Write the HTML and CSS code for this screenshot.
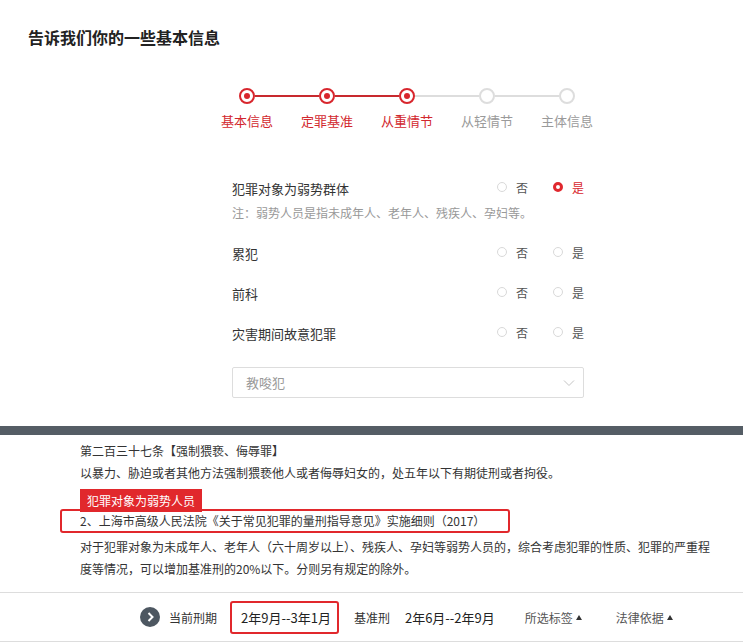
FILE: index.html
```html
<!DOCTYPE html>
<html lang="zh-CN">
<head>
    <meta charset="UTF-8">
    <title>量刑信息</title>
    <link rel="stylesheet" href="styles.css">
</head>
<body>
    <h1 class="title">告诉我们你的一些基本信息</h1>

    <div class="steps">
        <div class="track">
            <span class="dot done"></span><span class="bar done"></span>
            <span class="dot done"></span><span class="bar done"></span>
            <span class="dot done"></span><span class="bar"></span>
            <span class="dot"></span><span class="bar"></span>
            <span class="dot"></span>
        </div>
        <div class="labels">
            <span class="done">基本信息</span>
            <span class="done">定罪基准</span>
            <span class="done">从重情节</span>
            <span>从轻情节</span>
            <span>主体信息</span>
        </div>
    </div>

    <div class="form">
        <div class="row">
            <span>犯罪对象为弱势群体</span>
            <div class="radios">
                <label class="radio"><i></i>否</label>
                <label class="radio checked"><i></i>是</label>
            </div>
        </div>
        <p class="note">注：弱势人员是指未成年人、老年人、残疾人、孕妇等。</p>
        <div class="row">
            <span>累犯</span>
            <div class="radios">
                <label class="radio"><i></i>否</label>
                <label class="radio"><i></i>是</label>
            </div>
        </div>
        <div class="row">
            <span>前科</span>
            <div class="radios">
                <label class="radio"><i></i>否</label>
                <label class="radio"><i></i>是</label>
            </div>
        </div>
        <div class="row">
            <span>灾害期间故意犯罪</span>
            <div class="radios">
                <label class="radio"><i></i>否</label>
                <label class="radio"><i></i>是</label>
            </div>
        </div>
        <div class="select">
            <span>教唆犯</span>
            <svg width="12" height="8" viewBox="0 0 12 8"><polyline points="1,1.5 6,6.5 11,1.5" fill="none" stroke="#c4c4c4" stroke-width="1"/></svg>
        </div>
    </div>

    <div class="divider"></div>

    <div class="law">
        <p>第二百三十七条【强制猥亵、侮辱罪】</p>
        <p>以暴力、胁迫或者其他方法强制猥亵他人或者侮辱妇女的，处五年以下有期徒刑或者拘役。</p>
        <span class="tag">犯罪对象为弱势人员</span>
        <p class="source">2、上海市高级人民法院《关于常见犯罪的量刑指导意见》实施细则（2017）</p>
        <p class="rule">对于犯罪对象为未成年人、老年人（六十周岁以上）、残疾人、孕妇等弱势人员的，综合考虑犯罪的性质、犯罪的严重程度等情况，可以增加基准刑的20%以下。分则另有规定的除外。</p>
    </div>

    <div class="footer">
        <svg class="go" width="20" height="20" viewBox="0 0 20 20"><circle cx="10" cy="10" r="10" fill="#4d5761"/><polyline points="8.5,6 12.5,10 8.5,14" fill="none" stroke="#fff" stroke-width="2"/></svg>
        <span class="name first">当前刑期</span>
        <span class="current">2年9月--3年1月</span>
        <span class="name">基准刑</span>
        <span class="value">2年6月--2年9月</span>
        <span class="menu">所选标签<i></i></span>
        <span class="menu">法律依据<i></i></span>
    </div>
</body>
</html>
```

FILE: styles.css
```css
body {
    margin: 0;
    font-family: "Noto Sans CJK SC", "Liberation Sans", sans-serif;
    font-size: 13px;
    color: #333;
    background: #fff;
}
.title {
    margin: 0;
    padding: 27px 0 0 28px;
    font-size: 16px;
    line-height: 20px;
    font-weight: bold;
    color: #222;
}
.steps {
    margin-top: 41px;
}
.track {
    display: flex;
    align-items: center;
    padding-left: 239px;
}
.dot {
    box-sizing: border-box;
    width: 16px;
    height: 16px;
    border: 2px solid #ddd;
    border-radius: 50%;
    background: #fff;
    display: flex;
    align-items: center;
    justify-content: center;
}
.dot.done {
    border-color: #d8262d;
}
.dot.done::after {
    content: "";
    width: 6px;
    height: 6px;
    border-radius: 50%;
    background: #d8262d;
}
.bar {
    width: 64px;
    height: 2px;
    background: #ddd;
}
.bar.done {
    background: #c8292e;
}
.labels {
    display: flex;
    padding-left: 207px;
    margin-top: 9px;
}
.labels span {
    width: 80px;
    text-align: center;
    line-height: 16px;
    color: #9a9a9a;
}
.labels span.done {
    color: #d2282e;
}
.form {
    margin: 49px 0 0 232px;
    width: 352px;
}
.row {
    display: flex;
    justify-content: space-between;
    align-items: center;
    height: 20px;
    margin-top: 20px;
}
.row:first-child {
    margin-top: 0;
}
.radios {
    display: flex;
    gap: 25px;
    margin-top: -2px;
}
.radio {
    display: flex;
    align-items: center;
    gap: 9px;
    color: #555;
    font-size: 12px;
}
.radio i {
    box-sizing: border-box;
    width: 10px;
    height: 10px;
    border: 1px solid #d9d9d9;
    border-radius: 50%;
}
.radio.checked {
    color: #d8262d;
}
.radio.checked i {
    border: 3px solid #e0282e;
}
.note {
    margin: 5px 0 0;
    line-height: 20px;
    font-size: 12px;
    color: #999;
}
.select {
    box-sizing: border-box;
    margin-top: 24px;
    height: 31px;
    border: 1px solid #ddd;
    border-radius: 2px;
    display: flex;
    justify-content: space-between;
    align-items: center;
    padding: 0 8px 0 13px;
    color: #999;
}
.divider {
    margin-top: 28px;
    height: 9px;
    background: #555d65;
}
.law {
    padding: 5px 23px 0 80px;
    font-size: 12px;
    line-height: 22px;
    color: #333;
}
.law p {
    margin: 0;
}
.tag {
    position: relative;
    z-index: 1;
    display: inline-block;
    margin-top: 5px;
    height: 23px;
    line-height: 23px;
    padding: 0 7px;
    background: #e1282c;
    color: #fff;
}
.law .source {
    box-sizing: border-box;
    width: 450px;
    height: 24px;
    line-height: 20px;
    margin: -3px 0 0 -20px;
    padding-left: 18px;
    border: 2px solid #e1282c;
    border-radius: 3px;
}
.law .rule {
    margin-top: 3px;
}
.footer {
    margin-top: 12px;
    height: 48px;
    border-top: 1px solid #ddd;
    border-bottom: 1px solid #ddd;
    display: flex;
    align-items: center;
    padding-left: 140px;
    font-size: 12px;
}
.go {
    margin-right: 9px;
}
.name {
    color: #333;
    margin-right: 15px;
}
.name.first {
    margin-right: 13px;
}
.current {
    box-sizing: border-box;
    height: 33px;
    line-height: 29px;
    padding: 0 6px 0 9px;
    border: 2px solid #e1282c;
    border-radius: 3px;
    font-size: 13px;
    color: #222;
    margin-right: 15px;
}
.value {
    font-size: 13px;
    color: #222;
    margin-right: 30px;
}
.menu {
    color: #555;
    margin-right: 34px;
    display: flex;
    align-items: center;
}
.menu i {
    margin-left: 3px;
    width: 0;
    height: 0;
    border-left: 3.5px solid transparent;
    border-right: 3.5px solid transparent;
    border-bottom: 5px solid #333;
}
```
